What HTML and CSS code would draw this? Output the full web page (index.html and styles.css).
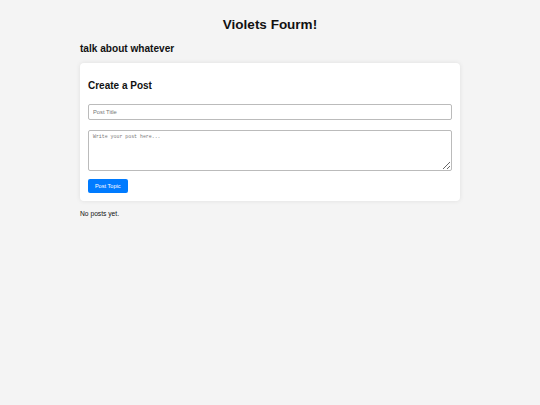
FILE: index.html
```html
<!DOCTYPE html>
<html lang="en">
<head>
<meta charset="utf-8">
<title>Violets Fourm!</title>
<link rel="stylesheet" href="styles.css">
</head>
<body>
<div class="page">
  <h1 class="title">Violets Fourm!</h1>
  <h2 class="subtitle">talk about whatever</h2>
  <div class="card">
    <h2 class="card-title">Create a Post</h2>
    <form class="post-form">
      <input class="field" type="text" placeholder="Post Title">
      <textarea class="area" placeholder="Write your post here..."></textarea>
      <div class="actions"><button class="btn" type="button">Post Topic</button></div>
    </form>
  </div>
  <p class="empty">No posts yet.</p>
</div>
</body>
</html>
```
FILE: styles.css
```css
html, body {
  margin: 0;
  padding: 0;
  background: #f4f4f4;
  font-family: "Liberation Sans", Arial, sans-serif;
  color: #111;
}
.page {
  width: 380px;
  margin: 0 auto;
  display: flex;
  flex-direction: column;
}
.title {
  margin: 17px 0 0;
  font-size: 13.5px;
  line-height: 16px;
  text-align: center;
  font-weight: bold;
}
.subtitle {
  margin: 10px 0 0;
  font-size: 10.1px;
  line-height: 12px;
  font-weight: bold;
}
.card {
  margin-top: 8px;
  background: #fff;
  border-radius: 4px;
  box-shadow: 0 0 5px rgba(0,0,0,0.09);
  padding: 17px 8px 8px;
}
.card-title {
  margin: 0;
  font-size: 10px;
  line-height: 12px;
  font-weight: bold;
}
.post-form {
  margin-top: 11.5px;
  display: flex;
  flex-direction: column;
  gap: 10px;
}
.field {
  box-sizing: border-box;
  width: 100%;
  height: 16px;
  margin: 0;
  padding: 0 4px;
  border: 1px solid #bbb;
  border-radius: 2px;
  font-family: "Liberation Sans", Arial, sans-serif;
  font-size: 5.8px;
  color: #111;
  background: #fff;
}
.area {
  box-sizing: border-box;
  width: 100%;
  height: 41px;
  margin: 0;
  padding: 3px 4px;
  border: 1px solid #bbb;
  border-radius: 2px;
  font-family: "Liberation Mono", monospace;
  font-size: 4.9px;
  line-height: 6px;
  background: #fff;
  display: block;
}
.field::placeholder, .area::placeholder {
  color: #777;
}
.actions {
  margin-top: -2px;
  display: flex;
}
.btn {
  box-sizing: border-box;
  height: 14.5px;
  width: 39.5px;
  padding: 0;
  border: none;
  border-radius: 2px;
  background: #007bff;
  color: #fff;
  font-family: "Liberation Sans", Arial, sans-serif;
  font-size: 5.6px;
}
.empty {
  margin: 8.5px 0 0;
  font-size: 6.7px;
  line-height: 8px;
}
```
